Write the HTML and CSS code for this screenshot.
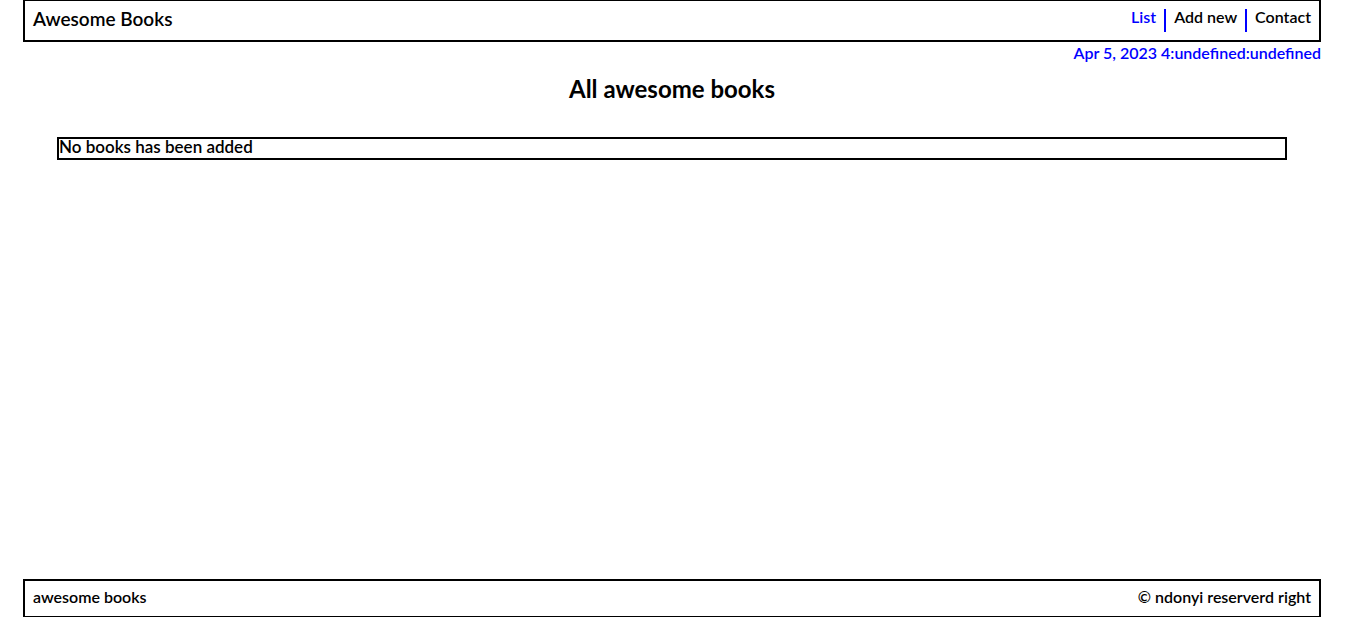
FILE: index.html
```html
<!DOCTYPE html>
<html lang="en">
<head>
<meta charset="utf-8">
<meta name="viewport" content="width=device-width, initial-scale=1">
<title>Awesome Books</title>
<link rel="stylesheet" href="styles.css">
</head>
<body>
<header class="header">
  <a class="logo" href="#list">Awesome Books</a>
  <nav>
    <ul class="menu">
      <li class="menu-item"><a class="active" href="#list">List</a></li>
      <li class="menu-item"><a href="#add">Add new</a></li>
      <li class="menu-item"><a href="#contact">Contact</a></li>
    </ul>
  </nav>
</header>
<p class="date">Apr 5, 2023 4:undefined:undefined</p>
<main class="main" id="list">
  <h1 class="title">All awesome books</h1>
  <div class="books">No books has been added</div>
</main>
<footer class="footer">
  <p>awesome books</p>
  <p class="copyright">© ndonyi reserverd right</p>
</footer>
</body>
</html>
```
FILE: styles.css
```css
* {
  box-sizing: border-box;
  margin: 0;
  padding: 0;
}

body {
  display: flex;
  flex-direction: column;
  min-height: 100vh;
  padding: 0 32px 0 23px;
  background: #fff;
  color: #000;
  font: 600 16px/17px Lato, "Open Sans", sans-serif;
}

a {
  color: inherit;
  text-decoration: none;
}

.header {
  display: flex;
  justify-content: space-between;
  align-items: flex-start;
  padding: 8px;
  border: 2px solid #000;
  border-top-width: 1px;
}

.logo {
  font-size: 19px;
  line-height: 20px;
}

.menu {
  display: flex;
  list-style: none;
}

.menu-item {
  height: 23px;
  padding: 0 8px;
  line-height: 15px;
  border-right: 2px solid #00f;
}

.menu-item:last-child {
  padding-right: 0;
  border-right: 0;
}

.active,
.date {
  color: #00f;
}

.date {
  padding: 2px 0;
  text-align: right;
}

.main {
  flex: 1;
  padding: 12px 34px 0;
}

.title {
  margin-bottom: 34px;
  font-size: 24px;
  line-height: 28px;
  text-align: center;
}

.books {
  padding-bottom: 3px;
  border: 2px solid #000;
  font-size: 17px;
  line-height: 16px;
}

.footer {
  display: flex;
  justify-content: space-between;
  padding: 8px 8px 12px;
  border: 2px solid #000;
  border-bottom-width: 1px;
  line-height: 15px;
}
```
